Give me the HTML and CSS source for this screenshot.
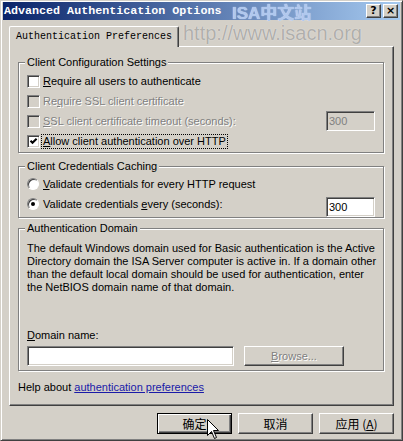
FILE: index.html
```html
<!DOCTYPE html>
<html>
<head>
<meta charset="utf-8">
<link rel="stylesheet" href="styles.css">
</head>
<body>
<div class="window">
  <div class="titlebar">
    <span class="title">Advanced Authentication Options</span>
    <span class="wm-title">ISA中文站</span>
    <div class="caption-btns">
      <div class="cbtn">?</div>
      <div class="cbtn">×</div>
    </div>
  </div>
  <div class="tabs">
    <div class="tab">Authentication Preferences</div>
    <span class="wm-url">http://www.isacn.org</span>
  </div>
  <div class="panel">
    <div class="group g1">
      <div class="group-title">Client Configuration Settings</div>
      <div class="row"><span class="check"></span><span class="lbl"><u>R</u>equire all users to authenticate</span></div>
      <div class="row disabled"><span class="check off"></span><span class="lbl">Re<u>q</u>uire SSL client certificate</span></div>
      <div class="row disabled"><span class="check off"></span><span class="lbl"><u>S</u>SL client certificate timeout (seconds):</span><span class="textbox off">300</span></div>
      <div class="row"><span class="check"><svg width="11" height="11" viewBox="0 0 11 11"><path d="M2.5 4.8 L4.5 6.8 L8.6 2.7" stroke="#000" stroke-width="2" fill="none"/></svg></span><span class="lbl focus"><u>A</u>llow client authentication over HTTP</span></div>
    </div>
    <div class="group g2">
      <div class="group-title">Client Credentials Caching</div>
      <div class="row"><span class="radio"></span><span class="lbl"><u>V</u>alidate credentials for every HTTP request</span></div>
      <div class="row"><span class="radio on"></span><span class="lbl">Validate credentials <u>e</u>very (seconds):</span><span class="textbox low">300</span></div>
    </div>
    <div class="group g3">
      <div class="group-title">Authentication Domain</div>
      <p class="para">The default Windows domain used for Basic authentication is the Active<br>Directory domain the ISA Server computer is active in. If a domain other<br>than the default local domain should be used for authentication, enter<br>the NetBIOS domain name of that domain.</p>
      <div class="field-label"><u>D</u>omain name:</div>
      <div class="domain-row">
        <span class="textbox wide"></span>
        <span class="btn disabled-btn"><u>B</u>rowse...</span>
      </div>
    </div>
    <div class="help">Help about <a class="link">authentication preferences</a></div>
  </div>
  <div class="buttons">
    <span class="btn dlg default">确定</span>
    <span class="btn dlg">取消</span>
    <span class="btn dlg">应用 (<u>A</u>)</span>
  </div>
  <svg class="cursor" width="13" height="22" viewBox="0 0 13 22"><path d="M0.5 0.5 L0.5 16.5 L4.5 12.5 L7.5 19.5 L9.5 18.5 L6.5 11.5 L11.5 11.5 Z" fill="#fff" stroke="#000" stroke-width="1"/></svg>
</div>
</body>
</html>
```
FILE: styles.css
```css
* { box-sizing: border-box; }
html, body { margin: 0; overflow: hidden; }
body {
  width: 403px;
  height: 441px;
  background: #d4d0c8;
  font-family: "Liberation Sans", Arial, sans-serif;
  font-size: 11px;
  color: #000;
}
.window {
  position: relative;
  width: 403px;
  height: 441px;
  border: 1px solid;
  border-color: #d4d0c8 #404040 #404040 #d4d0c8;
  box-shadow: inset 1px 1px #fff, inset -1px -1px #808080;
  padding: 1px 2px 2px 2px;
  background: #d4d0c8;
}
.titlebar {
  position: relative;
  height: 18px;
  display: flex;
  align-items: center;
  justify-content: space-between;
  background: linear-gradient(to right, #0a246a, #a6caf0);
  padding: 0 2px 0 1px;
}
.title {
  font-family: "Liberation Mono", monospace;
  font-weight: bold;
  font-size: 11.7px;
  color: #fff;
  white-space: nowrap;
}
.caption-btns {
  display: flex;
  gap: 2px;
  flex: none;
}
.cbtn {
  width: 15px;
  height: 14px;
  background: #d4d0c8;
  border: 1px solid;
  border-color: #fff #404040 #404040 #fff;
  box-shadow: inset -1px -1px #808080;
  text-align: center;
  font-family: "DejaVu Sans", sans-serif;
  font-weight: bold;
  font-size: 11px;
  line-height: 12px;
  color: #000;
}
.wm-title {
  position: absolute;
  left: 229px;
  top: -3px;
  font: bold 17px "Liberation Sans", "Noto Sans CJK SC", sans-serif;
  color: #b0c8ee;
  text-shadow: 0 0 1px #e8f0fc;
  white-space: nowrap;
}
.tabs {
  position: relative;
  display: flex;
  height: 21px;
  margin: 6px 0 -1px 6px;
}
.tab {
  position: relative;
  z-index: 1;
  width: 170px;
  height: 21px;
  background: #d4d0c8;
  border: 1px solid;
  border-color: #fff #404040 transparent #fff;
  border-bottom: none;
  border-radius: 2px 2px 0 0;
  box-shadow: inset -1px 0 #808080;
  font-family: "Liberation Mono", monospace;
  font-size: 10px;
  line-height: 20px;
  text-align: center;
  white-space: nowrap;
}
.wm-url {
  position: absolute;
  left: 174px;
  top: -4px;
  font: 20px "Liberation Sans", sans-serif;
  color: #b0afab;
  text-shadow: 0 0 1px #f4f4f4;
  white-space: nowrap;
}
.panel {
  margin: 0 6px;
  height: 360px;
  border: 1px solid;
  border-color: #fff #404040 #404040 #fff;
  box-shadow: inset -1px -1px #808080;
  padding: 15px 9px 0 8px;
}
.group {
  border: 1px solid #808080;
  box-shadow: inset 1px 1px #fff, 1px 1px #fff;
  padding: 0 8px;
}
.group-title {
  display: table;
  margin: -7px 0 0 -2px;
  padding: 0 2px;
  background: #d4d0c8;
  line-height: 13px;
  white-space: nowrap;
}
.g1 { padding-bottom: 1px; }
.g1 .group-title { margin-bottom: 2px; }
.g2 { margin-top: 13px; padding-bottom: 3px; }
.g2 .group-title { margin-bottom: 1px; }
.g3 { margin-top: 10px; padding-bottom: 4px; }
.row {
  display: flex;
  align-items: center;
  height: 20px;
  white-space: nowrap;
}
.lbl { margin-left: 3px; line-height: 13px; }
.focus { outline: 1px dotted #000; padding: 0 1px; margin-left: 2px; }
.disabled .lbl { color: #808080; text-shadow: 1px 1px 0 #fff; }
.check {
  width: 13px;
  height: 13px;
  flex: none;
  background: #fff;
  border: 1px solid;
  border-color: #808080 #fff #fff #808080;
  box-shadow: inset 1px 1px #404040, inset -1px -1px #d4d0c8;
}
.check svg { display: block; }
.check.off { background: #d4d0c8; }
.radio {
  width: 12px;
  height: 12px;
  flex: none;
  margin-right: 1px;
  border-radius: 50%;
  background: #fff;
  border: 1px solid;
  border-color: #808080 #fff #fff #808080;
  box-shadow: inset 1px 1px #404040;
  display: flex;
  align-items: center;
  justify-content: center;
}
.radio.on::after {
  content: "";
  width: 4px;
  height: 4px;
  border-radius: 50%;
  background: #000;
}
.textbox {
  display: block;
  margin-left: auto;
  width: 49px;
  height: 20px;
  background: #fff;
  border: 1px solid;
  border-color: #808080 #fff #fff #808080;
  box-shadow: inset 1px 1px #404040, inset -1px -1px #d4d0c8;
  padding: 2px 0 0 2px;
  line-height: 15px;
}
.textbox.off { background: #d4d0c8; color: #808080; }
.textbox.low { margin-top: 6px; }
.textbox.wide { margin-left: 0; width: 207px; }
.para { margin: 7px 0 0; line-height: 13px; white-space: nowrap; }
.field-label { margin-top: 35px; line-height: 13px; }
.domain-row { display: flex; gap: 10px; margin-top: 4px; }
.btn {
  display: flex;
  align-items: center;
  justify-content: center;
  height: 20px;
  background: #d4d0c8;
  border: 1px solid;
  border-color: #fff #404040 #404040 #fff;
  box-shadow: inset -1px -1px #808080;
}
.disabled-btn {
  width: 100px;
  color: #808080;
  text-shadow: 1px 1px 0 #fff;
}
.help { margin-top: 10px; line-height: 13px; }
.link { color: #1a1aa8; text-decoration: underline; }
.buttons {
  display: flex;
  justify-content: flex-end;
  gap: 6px;
  margin-top: 7px;
  padding-right: 6px;
}
.dlg {
  width: 75px;
  height: 21px;
  font-family: "Noto Sans CJK SC", sans-serif;
  font-size: 12px;
}
.dlg.default {
  border: 1px solid #000;
  box-shadow: inset 1px 1px #fff, inset -1px -1px #404040, inset -2px -2px #808080;
}
.cursor {
  position: absolute;
  left: 206px;
  top: 418px;
}
```
